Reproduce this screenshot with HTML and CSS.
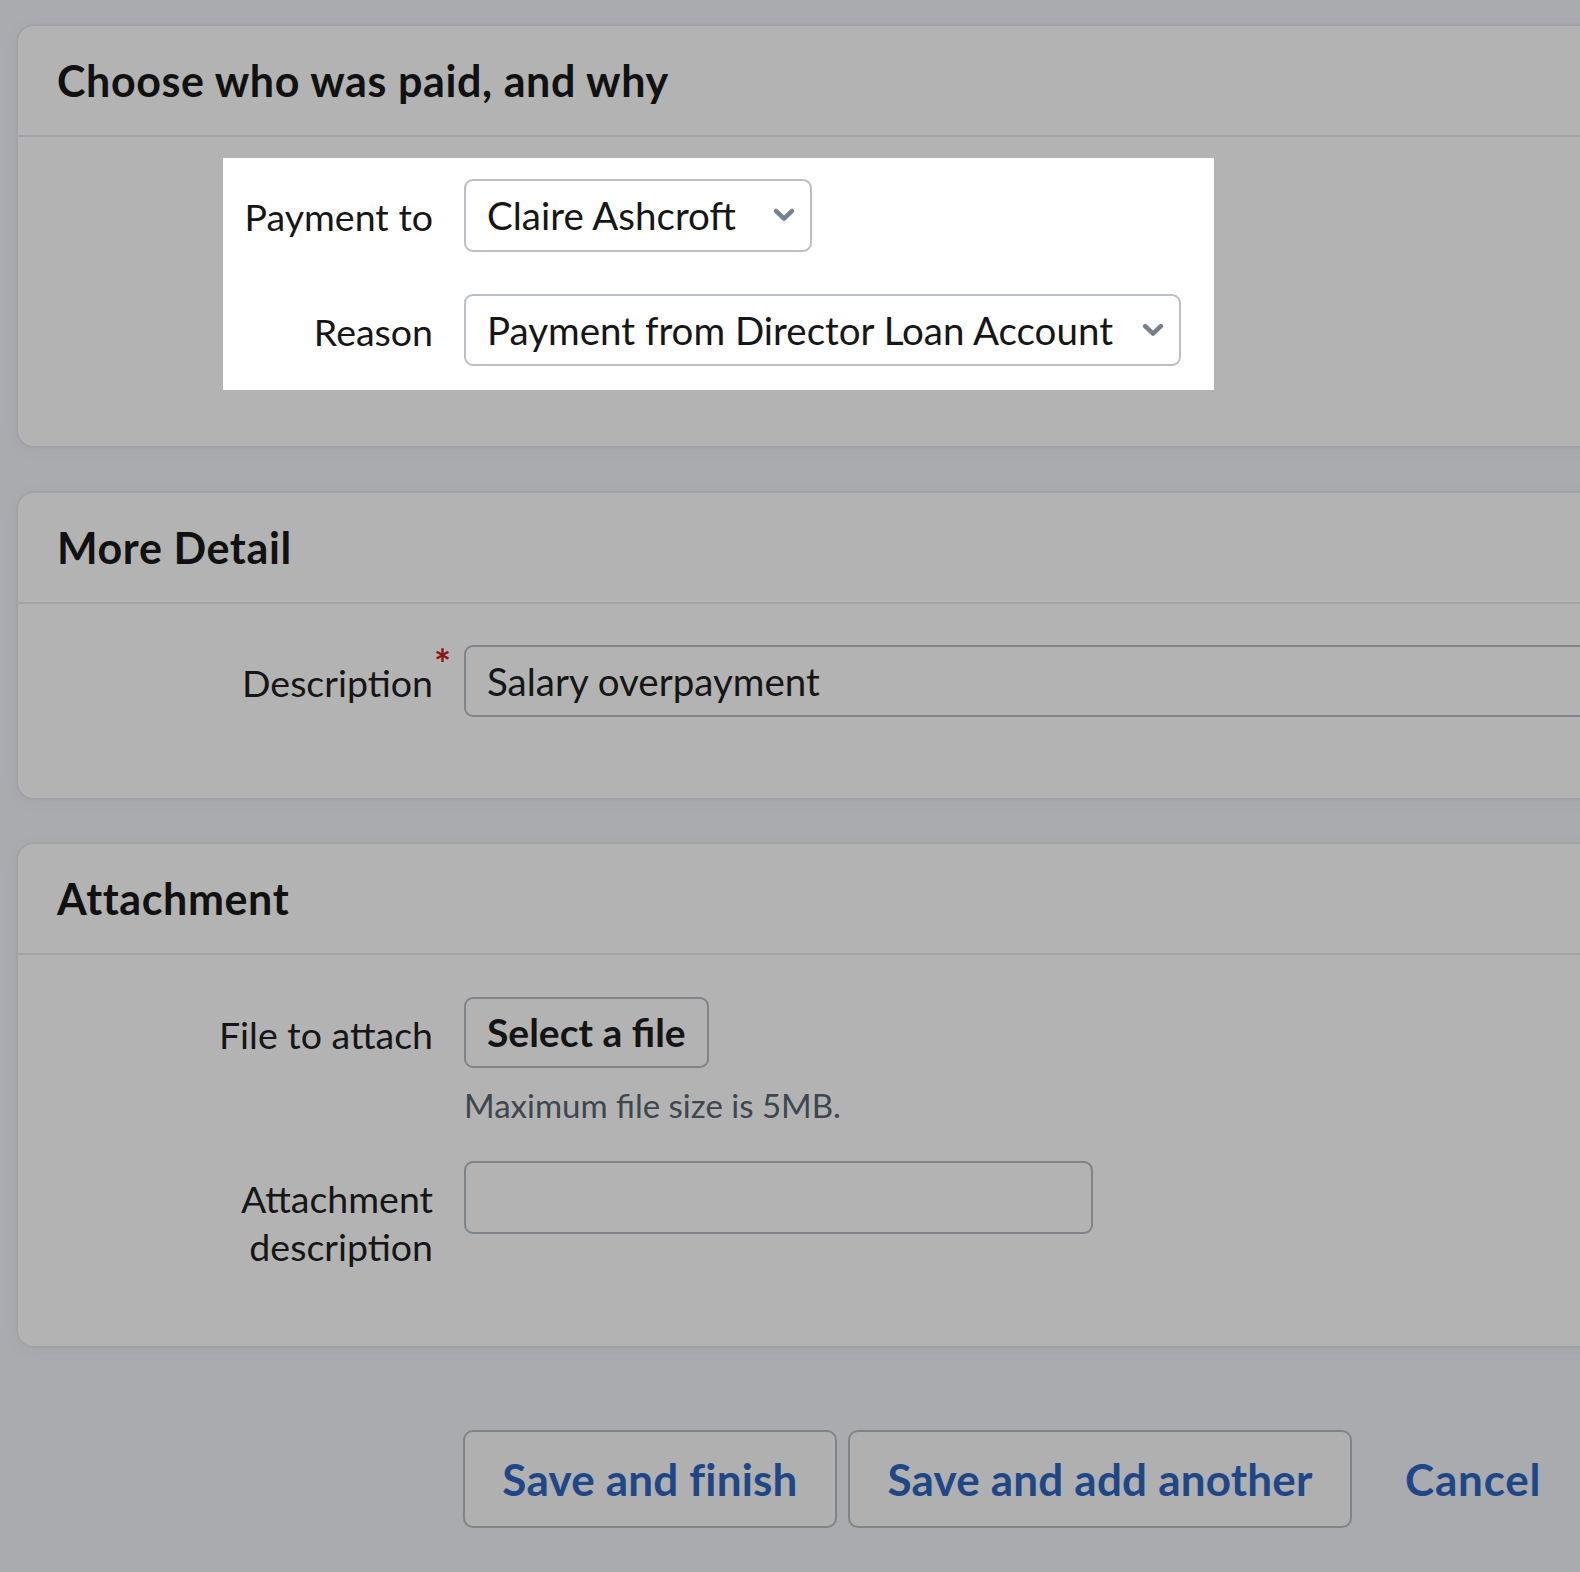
FILE: index.html
```html
<!DOCTYPE html>
<html lang="en">
<head>
<meta charset="utf-8">
<title>Payment</title>
<link rel="stylesheet" href="styles.css">
</head>
<body>
<div class="page">
  <section class="card">
    <header class="card-head"><h2>Choose who was paid, and why</h2></header>
    <div class="card-body first-body">
      <div class="spotlight">
        <div class="s-row">
          <label class="lbl s-lbl">Payment to</label>
          <div class="select payee"><span>Claire Ashcroft</span>
            <svg class="chev" viewBox="0 0 22 14" width="22" height="14"><path d="M3.2 3.2 L11 10.6 L18.8 3.2" fill="none" stroke="#78818a" stroke-width="4.6" stroke-linecap="round" stroke-linejoin="round"/></svg>
          </div>
        </div>
        <div class="s-row">
          <label class="lbl s-lbl">Reason</label>
          <div class="select reason"><span>Payment from Director Loan Account</span>
            <svg class="chev" viewBox="0 0 22 14" width="22" height="14"><path d="M3.2 3.2 L11 10.6 L18.8 3.2" fill="none" stroke="#78818a" stroke-width="4.6" stroke-linecap="round" stroke-linejoin="round"/></svg>
          </div>
        </div>
      </div>
    </div>
  </section>

  <section class="card">
    <header class="card-head"><h2>More Detail</h2></header>
    <div class="card-body detail-body">
      <div class="row">
        <label class="lbl">Description<span class="req">*</span></label>
        <div class="field"><div class="input wide">Salary overpayment</div></div>
      </div>
    </div>
  </section>

  <section class="card">
    <header class="card-head"><h2>Attachment</h2></header>
    <div class="card-body attach-body">
      <div class="row">
        <label class="lbl">File to attach</label>
        <div class="field">
          <button class="file-btn" type="button">Select a file</button>
          <p class="hint">Maximum file size is 5MB.</p>
        </div>
      </div>
      <div class="row row-attach">
        <label class="lbl">Attachment<br>description</label>
        <div class="field"><div class="input short"></div></div>
      </div>
    </div>
  </section>

  <div class="actions">
    <button class="btn btn-finish" type="button">Save and finish</button>
    <button class="btn btn-another" type="button">Save and add another</button>
    <a class="cancel" href="#">Cancel</a>
  </div>
</div>
</body>
</html>
```
FILE: styles.css
```css
html, body {
  margin: 0;
  padding: 0;
}
body {
  background: #a9abaf;
  font-family: "Lato", "Liberation Sans", sans-serif;
  color: #141414;
  overflow: hidden;
}
.page {
  padding: 24px 0 40px 16px;
}
.card {
  width: calc(100% + 40px);
  box-sizing: border-box;
  background: #b3b3b3;
  border: 2px solid #a2a3a7;
  border-radius: 18px;
  box-shadow: 0 3px 10px rgba(150, 155, 165, 0.25);
  margin-bottom: 42px;
}
.card:first-child {
  margin-bottom: 43px;
}
.card-head {
  height: 109px;
  border-bottom: 2px solid #a2a3a7;
  display: flex;
  align-items: center;
  padding-left: 39px;
}
.card-head h2 {
  margin: 0;
  font-size: 43px;
  font-weight: 700;
  color: #111;
  letter-spacing: 0.6px;
}

/* shared label */
.lbl {
  text-align: right;
  font-size: 37.5px;
  line-height: 48px;
  padding-top: 14px;
  color: #161616;
  position: relative;
  white-space: nowrap;
}

/* first card */
.first-body {
  padding: 21px 0 55.5px 205px;
}
.spotlight {
  width: 991px;
  box-sizing: border-box;
  background: #fff;
  padding: 21px 33px 24px 24px;
  display: flex;
  flex-direction: column;
  gap: 42px;
}
.s-row {
  display: flex;
  align-items: flex-start;
  gap: 31px;
}
.s-lbl {
  width: 186px;
  flex: none;
  display: flex;
  justify-content: flex-end;
}
.select {
  height: 72.5px;
  box-sizing: border-box;
  border: 2px solid #babfc4;
  border-radius: 9px;
  background: #fff;
  display: flex;
  align-items: center;
  justify-content: space-between;
  padding: 0 15px 0 21px;
  font-size: 38.5px;
  color: #161616;
}
.payee { width: 348px; }
.reason { width: 717px; }
.chev { flex: none; }

/* generic rows */
.row {
  display: grid;
  grid-template-columns: 415px 1fr;
  column-gap: 31px;
  align-items: start;
}
.req {
  position: absolute;
  right: -18px;
  top: -5px;
  color: #8c1616;
  font-size: 40px;
  font-weight: 700;
  line-height: 48px;
}
.detail-body {
  padding: 41px 0 80.5px 0;
}
.input {
  height: 72.5px;
  box-sizing: border-box;
  border: 2px solid #7f8489;
  border-radius: 9px;
  display: flex;
  align-items: center;
  padding-left: 21px;
  font-size: 38.5px;
  color: #161616;
}
.input.wide { width: calc(100% + 40px); }
.input.short { width: 629px; }

.attach-body {
  padding: 42px 0 74.5px 0;
}
.file-btn {
  height: 71.5px;
  box-sizing: border-box;
  border: 2px solid #7f8489;
  border-radius: 9px;
  background: transparent;
  padding: 0 21px;
  font-family: inherit;
  font-size: 39px;
  font-weight: 700;
  color: #141414;
}
.hint {
  margin: 17px 0 0 0;
  font-size: 33px;
  line-height: 40px;
  color: #3e464e;
}
.row-attach {
  margin-top: 36px;
}

.actions {
  display: flex;
  align-items: center;
  margin-top: 82px;
  padding-left: 447px;
  gap: 11px;
}
.btn {
  height: 98px;
  box-sizing: border-box;
  border: 2px solid #7f8489;
  border-radius: 10px;
  background: #b0b0b0;
  font-family: inherit;
  font-size: 44px;
  font-weight: 700;
  letter-spacing: 0.2px;
  color: #1f4787;
}
.btn-finish { width: 374px; }
.btn-another { width: 504px; }
.cancel {
  margin-left: 42px;
  font-size: 44px;
  font-weight: 700;
  letter-spacing: 0.8px;
  color: #1f4787;
  text-decoration: none;
}
```
